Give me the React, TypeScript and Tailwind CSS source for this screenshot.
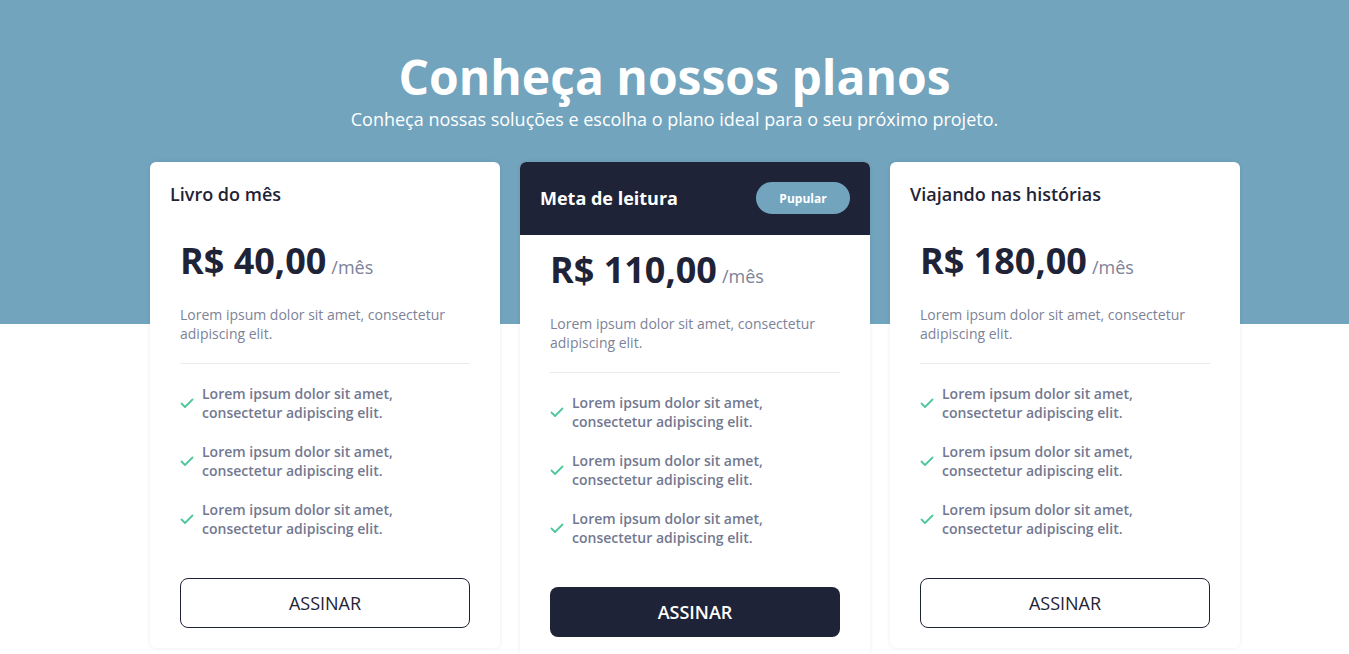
type Plan = {
  name: string;
  price: string;
  popular?: boolean;
};

const PLANS: Plan[] = [
  { name: "Livro do mês", price: "R$ 40,00" },
  { name: "Meta de leitura", price: "R$ 110,00", popular: true },
  { name: "Viajando nas histórias", price: "R$ 180,00" },
];

const FEATURES = [1, 2, 3];

function CheckIcon() {
  return (
    <svg width="14" height="14" viewBox="0 0 14 14" className="shrink-0" fill="none">
      <polyline
        points="1.5,7.5 5,11 12.5,3.5"
        stroke="#4fc79a"
        strokeWidth="1.8"
        strokeLinecap="round"
        strokeLinejoin="round"
      />
    </svg>
  );
}

function PlanCard({ plan }: { plan: Plan }) {
  return (
    <div className="w-[350px] shrink-0 rounded-md bg-white shadow-[0_0_4px_rgba(0,0,0,0.08)] overflow-hidden">
      {/* Header */}
      {plan.popular ? (
        <div className="flex items-center justify-between bg-[#1f2337] px-5 pt-5 pb-[21px]">
          <h3 className="text-[18px] leading-6 font-bold text-white">{plan.name}</h3>
          <span className="flex h-8 w-[94px] items-center justify-center rounded-full bg-[#72a4be] pt-[2px] text-xs font-bold text-white">
            Pupular
          </span>
        </div>
      ) : (
        <div className="px-5 py-5">
          <h3 className="text-[18px] leading-6 font-semibold text-[#1f2337]">{plan.name}</h3>
        </div>
      )}

      {/* Body */}
      <div className="px-[30px] pt-2 pb-5">
        <div className="flex items-baseline gap-[5px] leading-[54px]">
          <span className="text-[36px] font-bold text-[#1f2337]">{plan.price}</span>
          <span className="text-[18px] text-[#7d8298]">/mês</span>
        </div>
        <p className="mt-[11px] text-sm leading-[19px] text-[#7d8298]">
          Lorem ipsum dolor sit amet, consectetur adipiscing elit.
        </p>
        <div className="mt-5 h-px bg-[#ebebef]" />
        <ul className="mt-5 flex flex-col gap-5">
          {FEATURES.map((i) => (
            <li key={i} className="flex items-center gap-2">
              <CheckIcon />
              <span className="text-sm leading-[19px] font-semibold text-[#737891]">
                Lorem ipsum dolor sit amet,
                <br />
                consectetur adipiscing elit.
              </span>
            </li>
          ))}
        </ul>
        <button
          className={`mt-10 flex h-[50px] w-full items-center justify-center rounded-lg pt-[2px] text-[18px] ${
            plan.popular
              ? "bg-[#1f2337] font-semibold text-white"
              : "border border-[#1f2337] font-medium text-[#1f2337]"
          }`}
        >
          ASSINAR
        </button>
      </div>
    </div>
  );
}

export default function App() {
  return (
    <section className="min-h-[654px] bg-[linear-gradient(to_bottom,#72a4be_324px,#ffffff_324px)] pt-12 font-['Open_Sans',sans-serif]">
      {/* Heading */}
      <div className="text-center text-white">
        <h1 className="text-[48px] leading-[1.2] font-bold">Conheça nossos planos</h1>
        <p className="text-[18px] leading-[27px]">
          Conheça nossas soluções e escolha o plano ideal para o seu próximo projeto.
        </p>
      </div>

      {/* Plans */}
      <div className="mt-[29px] flex items-start gap-5 pl-[150px]">
        {PLANS.map((plan) => (
          <PlanCard key={plan.name} plan={plan} />
        ))}
      </div>
    </section>
  );
}
